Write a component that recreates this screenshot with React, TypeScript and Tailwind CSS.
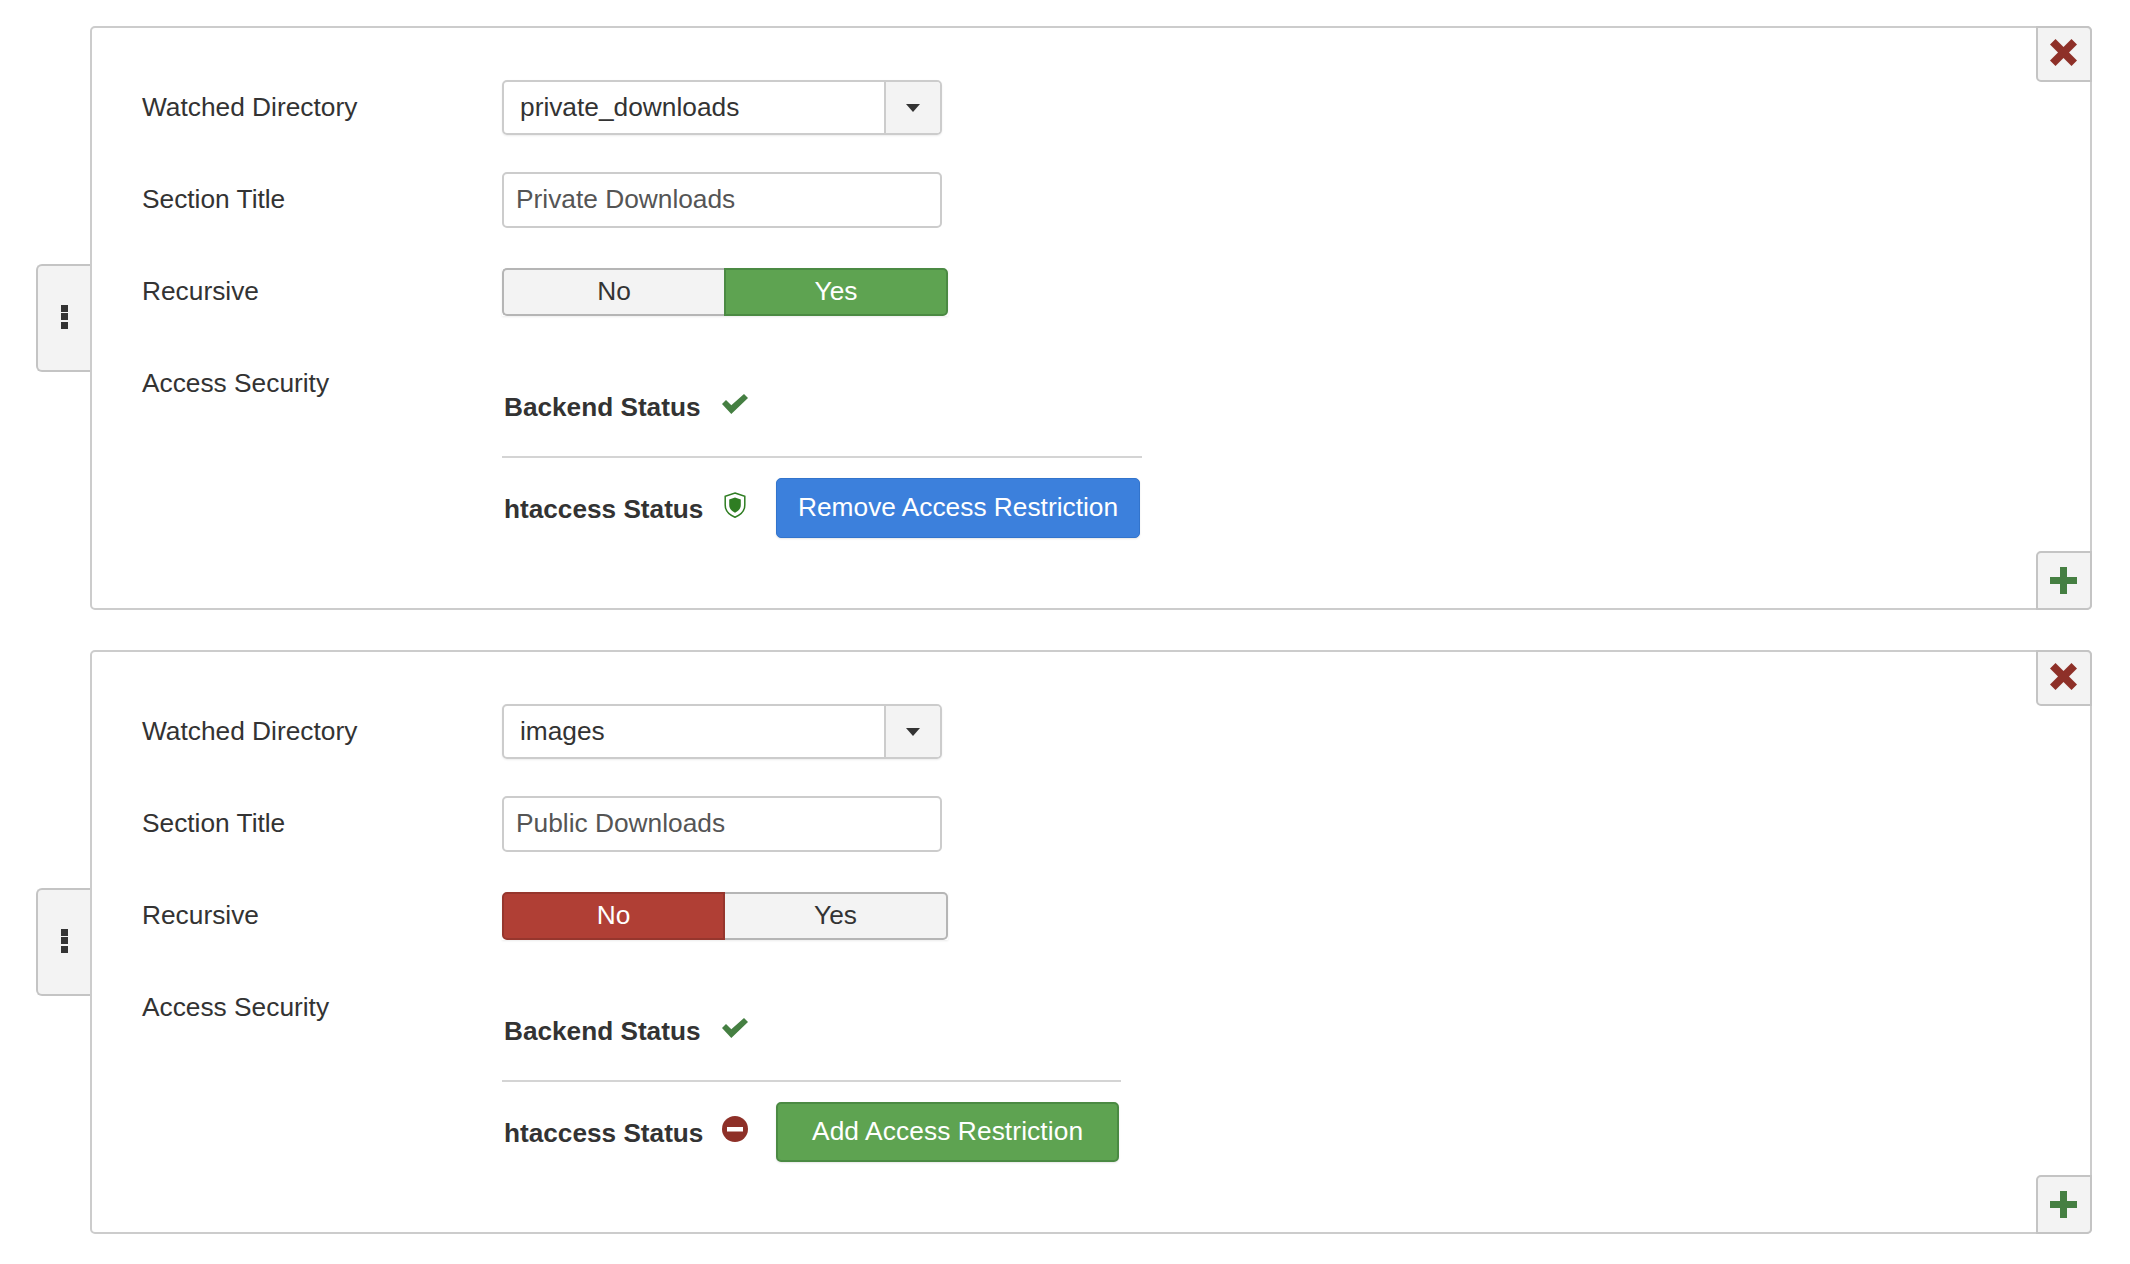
const font = "font-['Liberation_Sans',Arial,sans-serif]";

function CheckIcon() {
  return (
    <svg viewBox="0 0 26 20" className="w-[26px] h-[20px] fill-[#457f42]">
      <path d="M0 10 4 6l5.300 5.300L22 0l4 4L9.300 20z" />
    </svg>
  );
}

function ShieldIcon() {
  return (
    <svg viewBox="0 0 22 26" className="w-[22px] h-[26px]">
      <path d="M11 1 20.8 4.4V13c0 6-4.4 10-9.8 12.2C5.600 23 1.200 19 1.200 13V4.400z" fill="#fff" stroke="#2f7d22" strokeWidth="1.500" />
      <path d="M11 5.500 16.800 7.500V13c0 3.500-2.500 6.100-5.800 7.800C7.700 19.100 5.200 16.500 5.200 13V7.500z" fill="#2f7d22" />
    </svg>
  );
}

function MinusCircleIcon() {
  return (
    <svg viewBox="0 0 26 26" className="w-[26px] h-[26px]">
      <circle cx="13" cy="13" r="13" fill="#8e3028" />
      <rect x="5" y="11" width="16" height="4.500" fill="#fff" />
    </svg>
  );
}

function Row({ label, nudge, children }: { label: string; nudge?: boolean; children: React.ReactNode }) {
  return (
    <div className="flex items-center">
      <div className={nudge ? "w-[360px] shrink-0 pb-[1px] text-[26.3px] text-[#333]" : "w-[360px] shrink-0 text-[26.3px] text-[#333]"}>
        {label}
      </div>
      {children}
    </div>
  );
}

function Toggle({ value }: { value: "yes" | "no" }) {
  return (
    <div className="flex w-[446px] h-[48px] text-[26.3px] shadow-[0_1px_2px_rgba(0,0,0,0.08)]">
      <div
        className={
          value === "no"
            ? "w-[223px] pb-[1px] flex items-center justify-center rounded-l-[5px] border-2 border-[#96362d] bg-[#b03f35] text-white"
            : "w-[222px] pb-[1px] flex items-center justify-center rounded-l-[5px] border-2 border-r-0 border-[#b5b5b5] bg-[#f3f3f3] text-[#333]"
        }
      >
        No
      </div>
      <div
        className={
          value === "yes"
            ? "flex-1 pb-[1px] flex items-center justify-center rounded-r-[5px] border-2 border-[#4b8a43] bg-[#5ea351] text-white"
            : "flex-1 pb-[1px] flex items-center justify-center rounded-r-[5px] border-2 border-l-0 border-[#b5b5b5] bg-[#f3f3f3] text-[#333]"
        }
      >
        Yes
      </div>
    </div>
  );
}

function SectionCard({
  directory,
  title,
  recursive,
  secured,
}: {
  directory: string;
  title: string;
  recursive: "yes" | "no";
  secured: boolean;
}) {
  return (
    <div className="relative w-[2002px] rounded-[5px] border-2 border-[#ccc] bg-white pt-[52px] pl-[50px] pb-[70px]">
      {/* drag handle */}
      <div className="absolute left-[-56px] top-[236px] w-[54px] h-[108px] rounded-l-[6px] border-2 border-r-0 border-[#c4c4c4] bg-[#f3f3f3] pb-[3px] flex flex-col items-center justify-center gap-[1.500px]">
        <span className="w-[7px] h-[7px] bg-[#333]" />
        <span className="w-[7px] h-[7px] bg-[#333]" />
        <span className="w-[7px] h-[7px] bg-[#333]" />
      </div>

      {/* remove */}
      <div className="absolute right-[-2px] top-[-2px] w-[56px] h-[56px] rounded-tr-[5px] rounded-bl-[5px] border-2 border-[#c4c4c4] bg-[#f3f3f3] pb-[3px] pr-[1px] flex items-center justify-center">
        <svg viewBox="0 0 27 27" className="w-[27px] h-[27px] fill-[#8e3028]">
          <path d="M5.500 0 13.500 8 21.500 0 27 5.500 19 13.500 27 21.500 21.500 27 13.500 19 5.500 27 0 21.500 8 13.500 0 5.500z" />
        </svg>
      </div>

      {/* add */}
      <div className="absolute right-[-2px] bottom-[-2px] w-[56px] h-[59px] rounded-tl-[5px] rounded-br-[5px] border-2 border-[#c4c4c4] bg-[#f3f3f3] pr-[1px] flex items-center justify-center">
        <svg viewBox="0 0 27 27" className="w-[27px] h-[27px] fill-[#457f42]">
          <path d="M10 0h7v10h10v7H17v10h-7V17H0v-7h10z" />
        </svg>
      </div>

      <Row label="Watched Directory">
        <div className="flex w-[440px] h-[55px] rounded-[5px] border-2 border-[#ccc] text-[26.3px] text-[#333] shadow-[0_1px_2px_rgba(0,0,0,0.08)]">
          <div className="flex-1 flex items-center pl-[16px]">{directory}</div>
          <div className="w-[56px] flex items-center justify-center border-l-2 border-[#ccc] bg-[#f3f3f3] rounded-r-[4px]">
            <span className="w-0 h-0 border-x-[7.500px] border-x-transparent border-t-[8px] border-t-[#333]" />
          </div>
        </div>
      </Row>

      <div className="mt-[37px]">
        <Row label="Section Title" nudge>
          <input
            readOnly
            value={title}
            className="w-[440px] h-[56px] rounded-[5px] border-2 border-[#ccc] pl-[12px] pb-[2px] text-[26.3px] text-[#555] outline-none"
          />
        </Row>
      </div>

      <div className="mt-[40px]">
        <Row label="Recursive" nudge>
          <Toggle value={recursive} />
        </Row>
      </div>

      <div className="mt-[41px] flex items-start">
        <div className="w-[360px] shrink-0 text-[26.3px] leading-[36px] mt-[8px] text-[#333]">Access Security</div>
        <div className="w-fit">
          <div className="flex items-center h-[101px] pb-[14px] pl-[2px] border-b-2 border-[#d4d4d4] pt-[15px]">
            <b className="w-[218px] pt-[1px] text-[26.2px] text-[#333]">Backend Status</b>
            <span className="-mt-[7px]"><CheckIcon /></span>
          </div>
          <div className="flex items-center pt-[20px] pl-[2px] pr-[2px]">
            <b className="w-[218px] pt-[3px] text-[26.2px] text-[#333]">htaccess Status</b>
            <span className="flex w-[54px] -mt-[7px]">{secured ? <span className="ml-[2px]"><ShieldIcon /></span> : <MinusCircleIcon />}</span>
            {secured ? (
              <div className="h-[60px] px-[21px] flex items-center rounded-[5px] border border-[#3274cc] bg-[#3c80dc] text-[26.3px] text-white shadow-[0_1px_2px_rgba(0,0,0,0.1)]">
                Remove Access Restriction
              </div>
            ) : (
              <div className="h-[60px] pl-[34px] pr-[34px] flex items-center rounded-[5px] border-2 border-[#4b8a43] bg-[#5ea351] text-[26.3px] tracking-[0.1px] text-white shadow-[0_1px_2px_rgba(0,0,0,0.1)]">
                Add Access Restriction
              </div>
            )}
          </div>
        </div>
      </div>
    </div>
  );
}

export default function App() {
  return (
    <div className={`${font} min-h-[1264px] bg-white pt-[26px] pl-[90px] flex flex-col gap-[40px]`}>
      <SectionCard directory="private_downloads" title="Private Downloads" recursive="yes" secured />
      <SectionCard directory="images" title="Public Downloads" recursive="no" secured={false} />
    </div>
  );
}
